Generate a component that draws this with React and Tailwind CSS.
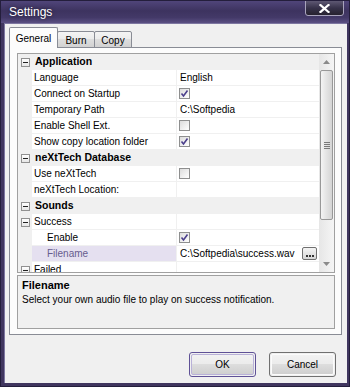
import React from 'react';

const rows = [
    { type: 'cat', label: 'Application' },
    { type: 'prop', label: 'Language', value: 'English' },
    { type: 'prop', label: 'Connect on Startup', check: true },
    { type: 'prop', label: 'Temporary Path', value: 'C:\\Softpedia' },
    { type: 'prop', label: 'Enable Shell Ext.', check: false },
    { type: 'prop', label: 'Show copy location folder', check: true },
    { type: 'cat', label: 'neXtTech Database' },
    { type: 'prop', label: 'Use neXtTech', check: false },
    { type: 'prop', label: 'neXtTech Location:', value: '' },
    { type: 'cat', label: 'Sounds' },
    { type: 'group', label: 'Success' },
    { type: 'prop', label: 'Enable', check: true, indent: true },
    { type: 'prop', label: 'Filename', value: 'C:\\Softpedia\\success.wav', indent: true, selected: true, browse: true },
    { type: 'group', label: 'Failed' },
];

const MinusBox = () => (
    <div className="ml-[3px] w-[9px] h-[9px] border border-[#919191] bg-[linear-gradient(to_bottom,#ffffff,#e6e6e6)] flex items-center justify-center">
        <div className="w-[5px] h-px bg-[#222]" />
    </div>
);

const CheckBox = ({ checked }) => (
    <div className="w-[11px] h-[11px] border border-[#8e8f8f] bg-[linear-gradient(135deg,#dcdcdc,#ffffff)] flex items-center justify-center">
        {checked && (
            <svg width="9" height="9" viewBox="0 0 9 9">
                <path d="M1.5 4.5 L3.5 7 L7.5 1.5" fill="none" stroke="#4b3f8c" strokeWidth="1.6" />
            </svg>
        )}
    </div>
);

const Row = ({ row }) => {
    if (row.type === 'cat') {
        return (
            <div className="flex h-[16px] shrink-0 bg-[#f0f0f0] items-center">
                <div className="w-[14px] flex items-center"><MinusBox /></div>
                <div className="pl-[3px] font-bold text-[10.5px] text-black">{row.label}</div>
            </div>
        );
    }
    const labelCls = row.selected ? 'bg-[#e5e0f0] text-[#675c8e]' : 'bg-white text-black';
    return (
        <div className="flex h-[16px] shrink-0">
            <div className="w-[14px] bg-[#f0f0f0] flex items-center">
                {row.type === 'group' && <MinusBox />}
            </div>
            <div className={`w-[144px] border-b border-[#f0f0f0] flex items-center ${row.indent ? 'pl-[15px]' : 'pl-[2px]'} ${labelCls}`}>
                {row.label}
            </div>
            <div className="flex-1 bg-white border-b border-l border-[#f0f0f0] flex items-center pl-[2px] pr-[2px]">
                {row.check !== undefined ? (
                    <CheckBox checked={row.check} />
                ) : (
                    <span className="pl-px">{row.value}</span>
                )}
                {row.browse && (
                    <div className="ml-auto w-[15px] h-[13px] rounded-[2px] border border-[#707070] bg-[linear-gradient(to_bottom,#f4f4f4,#d6d6d6)] flex items-end justify-center pb-[2px]">
                        <div className="flex gap-px">
                            <div className="w-[2px] h-[2px] bg-[#333]" />
                            <div className="w-[2px] h-[2px] bg-[#333]" />
                            <div className="w-[2px] h-[2px] bg-[#333]" />
                        </div>
                    </div>
                )}
            </div>
        </div>
    );
};

const ScrollBar = () => (
    <div className="w-[15px] bg-[linear-gradient(to_right,#e6e6e6,#f5f5f5)] flex flex-col items-center">
        <div className="h-[16px] w-full flex items-center justify-center">
            <svg width="7" height="4" viewBox="0 0 7 4"><path d="M0 4 L3.5 0 L7 4 Z" fill="#8a8a8a" /></svg>
        </div>
        <div className="w-[13px] h-[150px] rounded-[2px] border border-[#989898] bg-[linear-gradient(to_right,#f4f4f4,#e3e3e3_50%,#d4d4d4)] flex flex-col items-center justify-center gap-[1px]">
            <div className="w-[6px] h-px bg-[#7a7a7a]" />
            <div className="w-[6px] h-px bg-[#7a7a7a]" />
            <div className="w-[6px] h-px bg-[#7a7a7a]" />
            <div className="w-[6px] h-px bg-[#7a7a7a]" />
        </div>
        <div className="flex-1" />
        <div className="h-[16px] w-full flex items-center justify-center">
            <svg width="7" height="4" viewBox="0 0 7 4"><path d="M0 0 L3.5 4 L7 0 Z" fill="#8a8a8a" /></svg>
        </div>
    </div>
);

const Tab = ({ label, active }) =>
    active ? (
        <div className="relative z-10 w-[49px] h-[21px] bg-[#fcfcfc] border border-b-0 border-[#898c95] rounded-t-[2px] flex items-start justify-center pt-[3px]">
            {label}
        </div>
    ) : (
        <div className="w-[38px] h-[17px] -ml-px bg-[linear-gradient(to_bottom,#f4f4f4,#ececec_45%,#dedede_50%,#d2d2d2)] border border-[#898c95] rounded-t-[2px] flex items-center justify-center pt-[2px]">
            {label}
        </div>
    );

const WinButton = ({ label, focused }) => (
    <div className={`w-[67px] h-[25px] rounded-[3px] border ${focused ? 'border-[#5f5196]' : 'border-[#707070]'} p-px`}>
        <div className={`w-full h-full rounded-[2px] border ${focused ? 'border-[#b9b1d8]' : 'border-[#fbfbfb]'} bg-[linear-gradient(to_bottom,#f2f2f2,#ebebeb_50%,#dddddd_50%,#cfcfcf)] flex items-center justify-center text-[10px] text-black`}>
            {label}
        </div>
    </div>
);

export default function App() {
    return (
        <div className="w-[350px] h-[387px] flex flex-col bg-[#40365f] border border-[#241e3c] font-['Liberation_Sans',Arial,sans-serif] text-[10px] text-black overflow-hidden">
            <div className="h-[22px] shrink-0 flex items-start justify-between bg-[linear-gradient(to_bottom,#50457a,#3d335f_45%,#433968_75%,#5a4f82)]">
                <div className="pl-[8px] pt-[4px] text-[12px] text-white leading-[14px] [text-shadow:0_0_4px_rgba(0,0,0,0.6)]">Settings</div>
                <div className="mr-[5px] w-[39px] h-[16px] -mt-px rounded-b-[3px] border border-[#a9a4bd] bg-[linear-gradient(to_bottom,#5e5873,#37324a_50%,#26222f)] flex items-center justify-center">
                    <svg width="11" height="9" viewBox="0 0 11 9">
                        <path d="M1.5 1 L9.5 8 M9.5 1 L1.5 8" stroke="#ffffff" strokeWidth="2.2" strokeLinecap="square" />
                    </svg>
                </div>
            </div>
            <div className="flex-1 ml-[3px] mr-[2px] mb-[3px] bg-[#f0f0f0] border-t border-l border-[#7d76a0] flex flex-col">
                <div className="pt-[3px] pl-[4px] pr-[5px] flex flex-col">
                    <div className="flex items-end h-[21px] -mb-px">
                        <Tab label="General" active />
                        <Tab label="Burn" />
                        <Tab label="Copy" />
                    </div>
                    <div className="h-[288px] border border-[#898c95] bg-[#fcfcfc] pt-[5px] pl-[7px] pr-[6px] flex flex-col gap-[2px]">
                        <div className="h-[220px] shrink-0 border border-[#a0a0a0] flex overflow-hidden">
                            <div className="flex-1 flex flex-col overflow-hidden">
                                {rows.map((r, i) => (
                                    <Row key={i} row={r} />
                                ))}
                            </div>
                            <ScrollBar />
                        </div>
                        <div className="h-[54px] border border-[#a0a0a0] bg-[#f0f0f0] pl-[4px] pt-[2px]">
                            <div className="font-bold text-[11px] leading-[14px]">Filename</div>
                            <div className="leading-[14px] mt-[1px]">Select your own audio file to play on success notification.</div>
                        </div>
                    </div>
                </div>
                <div className="mt-[17px] flex justify-end gap-[13px] pr-[11px]">
                    <WinButton label="OK" focused />
                    <WinButton label="Cancel" />
                </div>
            </div>
        </div>
    );
}
